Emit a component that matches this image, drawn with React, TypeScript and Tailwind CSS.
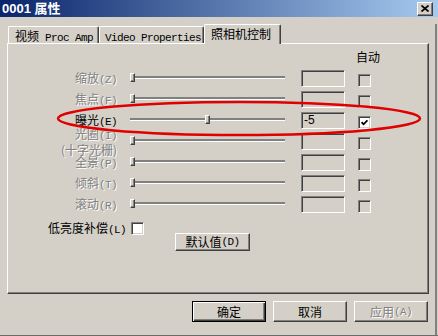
import React from "react"

const raised =
  "border border-t-white border-l-white border-r-[#404040] border-b-[#404040] shadow-[inset_-1px_-1px_0_#808080]"
const sunken =
  "border border-t-[#808080] border-l-[#808080] border-r-white border-b-white shadow-[inset_1px_1px_0_#404040,inset_-1px_-1px_0_#d4d0c8]"
const dim = "text-[#808080] [text-shadow:1px_1px_0_#ffffff]"
const mono = "font-['Liberation_Mono',monospace] text-[11px] tracking-[-0.6px]"

type Row = {
  zh: string
  k: string
  zh2?: string
  active?: boolean
  value?: string
  checked?: boolean
  thumb: string
}

const rows: Row[] = [
  { zh: "缩放", k: "Z", thumb: "left-0" },
  { zh: "焦点", k: "F", thumb: "left-0" },
  { zh: "曝光", k: "E", active: true, value: "-5", checked: true, thumb: "left-[75px]" },
  { zh: "光圈", k: "I", zh2: "(十字光栅)", thumb: "left-0" },
  { zh: "全景", k: "P", thumb: "left-0" },
  { zh: "倾斜", k: "T", thumb: "left-0" },
  { zh: "滚动", k: "R", thumb: "left-0" },
]

function Key({ k }: { k: string }) {
  return <span className={mono}>({k})</span>
}

function Check({ on, enabled }: { on?: boolean; enabled?: boolean }) {
  return (
    <div
      className={`${sunken} w-[13px] h-[13px] flex items-center justify-center ${
        enabled ? "bg-white" : "bg-[#d4d0c8]"
      }`}
    >
      {on && (
        <svg width="7" height="7" viewBox="0 0 7 7">
          <polyline points="0.6,3.2 2.6,5.3 6.4,1.3" fill="none" stroke="#000" strokeWidth="1.8" />
        </svg>
      )}
    </div>
  )
}

function TitleBar() {
  return (
    <div className="flex h-[17px] items-center justify-between bg-[linear-gradient(90deg,#0a246a,#a6caf0)] pl-[2px] pr-[5px]">
      <span className="font-['Liberation_Sans','Noto_Sans_CJK_SC',sans-serif] text-[13px] font-bold leading-[15px] text-white">
        0001 属性
      </span>
      <div className={`${raised} flex h-[14px] w-[16px] items-center justify-center bg-[#d4d0c8]`}>
        <svg width="8" height="7" viewBox="0 0 8 7">
          <path d="M0.5 0.5 L7.5 6.5 M7.5 0.5 L0.5 6.5" stroke="#000" strokeWidth="1.7" />
        </svg>
      </div>
    </div>
  )
}

function SliderRow({ r }: { r: Row }) {
  return (
    <div className="flex h-[21px]">
      <div
        className={`flex w-[109px] flex-col items-end justify-center text-right leading-[13px] whitespace-nowrap ${
          r.active ? "text-black" : dim
        }`}
      >
        <span>
          {r.zh}
          <Key k={r.k} />
        </span>
        {r.zh2 && <span>{r.zh2}</span>}
      </div>
      <div className="relative ml-[13px] w-[155px]">
        <div className="absolute left-0 right-0 top-[8px] h-[3px] border-b border-white bg-[#808080]" />
        <div className={`absolute top-[5px] h-[9px] w-[5px] bg-[#d4d0c8] ${raised} ${r.thumb}`} />
      </div>
      <div
        className={`${sunken} ml-[16px] mt-[2px] flex h-[17px] w-[44px] items-center bg-[#d4d0c8] pl-[2px] font-['Liberation_Sans',sans-serif] text-[12px] leading-[13px]`}
      >
        {r.value}
      </div>
      <div className="ml-[13px] mt-[6px]">
        <Check on={r.checked} enabled={r.active} />
      </div>
    </div>
  )
}

export default function App() {
  const tab =
    "rounded-t-[2px] border-l border-t border-r border-l-white border-t-white border-r-[#404040] shadow-[inset_-1px_0_0_#808080] pt-[2px] whitespace-nowrap bg-[#d4d0c8]"

  return (
    <div className="relative h-[336px] w-[438px] overflow-hidden bg-[#d4d0c8] font-['Noto_Sans_CJK_SC',sans-serif] text-[12px] leading-[14px] text-black">
      <TitleBar />

      <div className="h-[311px] w-[437px] border-r-2 border-r-[#808080]">
        {/* tabs */}
        <div className="ml-[8px] mt-[7px] flex h-[19px] items-end">
          <div className={`${tab} h-[17px] w-[91px] pl-[6px]`}>
            视频<span className={mono}> Proc Amp</span>
          </div>
          <div className={`${tab} h-[17px] w-[105px] pl-[5px]`}>
            <span className={mono}>Video Properties</span>
          </div>
          <div className={`${tab} relative z-10 -mb-[1px] h-[20px] w-[77px] pl-[6px]`}>照相机控制</div>
        </div>

        {/* panel */}
        <div className={`${raised} relative ml-[7px] h-[251px] w-[422px]`}>
          <div className="h-[24px] pl-[348px] pt-[6px]">自动</div>
          {rows.map((r) => (
            <SliderRow key={r.k} r={r} />
          ))}
          <div className="ml-[40px] mt-[7px] flex h-[13px] items-center">
            <span className="whitespace-nowrap">
              低亮度补偿
              <Key k="L" />
            </span>
            <div className="ml-[5px]">
              <Check enabled />
            </div>
          </div>
          <div className={`${raised} -mt-[2px] ml-[167px] flex h-[18px] w-[75px] items-center justify-center`}>
            默认值<Key k="D" />
          </div>
        </div>

        {/* dialog buttons */}
        <div className="ml-[192px] mt-[7px] flex gap-[7px]">
          <div className="flex h-[21px] w-[74px] items-center justify-center border border-black shadow-[inset_1px_1px_0_#ffffff,inset_-1px_-1px_0_#404040,inset_-2px_-2px_0_#808080]">
            确定
          </div>
          <div className={`${raised} flex h-[21px] w-[74px] items-center justify-center`}>取消</div>
          <div className={`${raised} flex h-[21px] w-[74px] items-center justify-center ${dim}`}>
            应用<Key k="A" />
          </div>
        </div>
      </div>

      {/* what lies beneath the dialog */}
      <div className="flex h-[8px] border-t border-[#6c6c6c]">
        <div className="w-[143px] border-t border-white bg-[#d4d0c8]" />
        <div className="w-[11px] border-l border-white bg-[#c8c4bc]" />
        <div className="flex-1 border-l border-[#404040] bg-[linear-gradient(90deg,#9a9a95_0%,#707070_25%,#8a8a86_45%,#b5b5ad_58%,#b8b8b0_64%,#7f7f7a_75%,#9a9a94_100%)]" />
      </div>

      {/* red marker drawn over the screenshot */}
      <svg width="438" height="336" className="pointer-events-none absolute left-0 top-0">
        <ellipse cx="239" cy="118.5" rx="181" ry="16.5" fill="none" stroke="#e00000" strokeWidth="2.5" />
      </svg>
    </div>
  )
}
